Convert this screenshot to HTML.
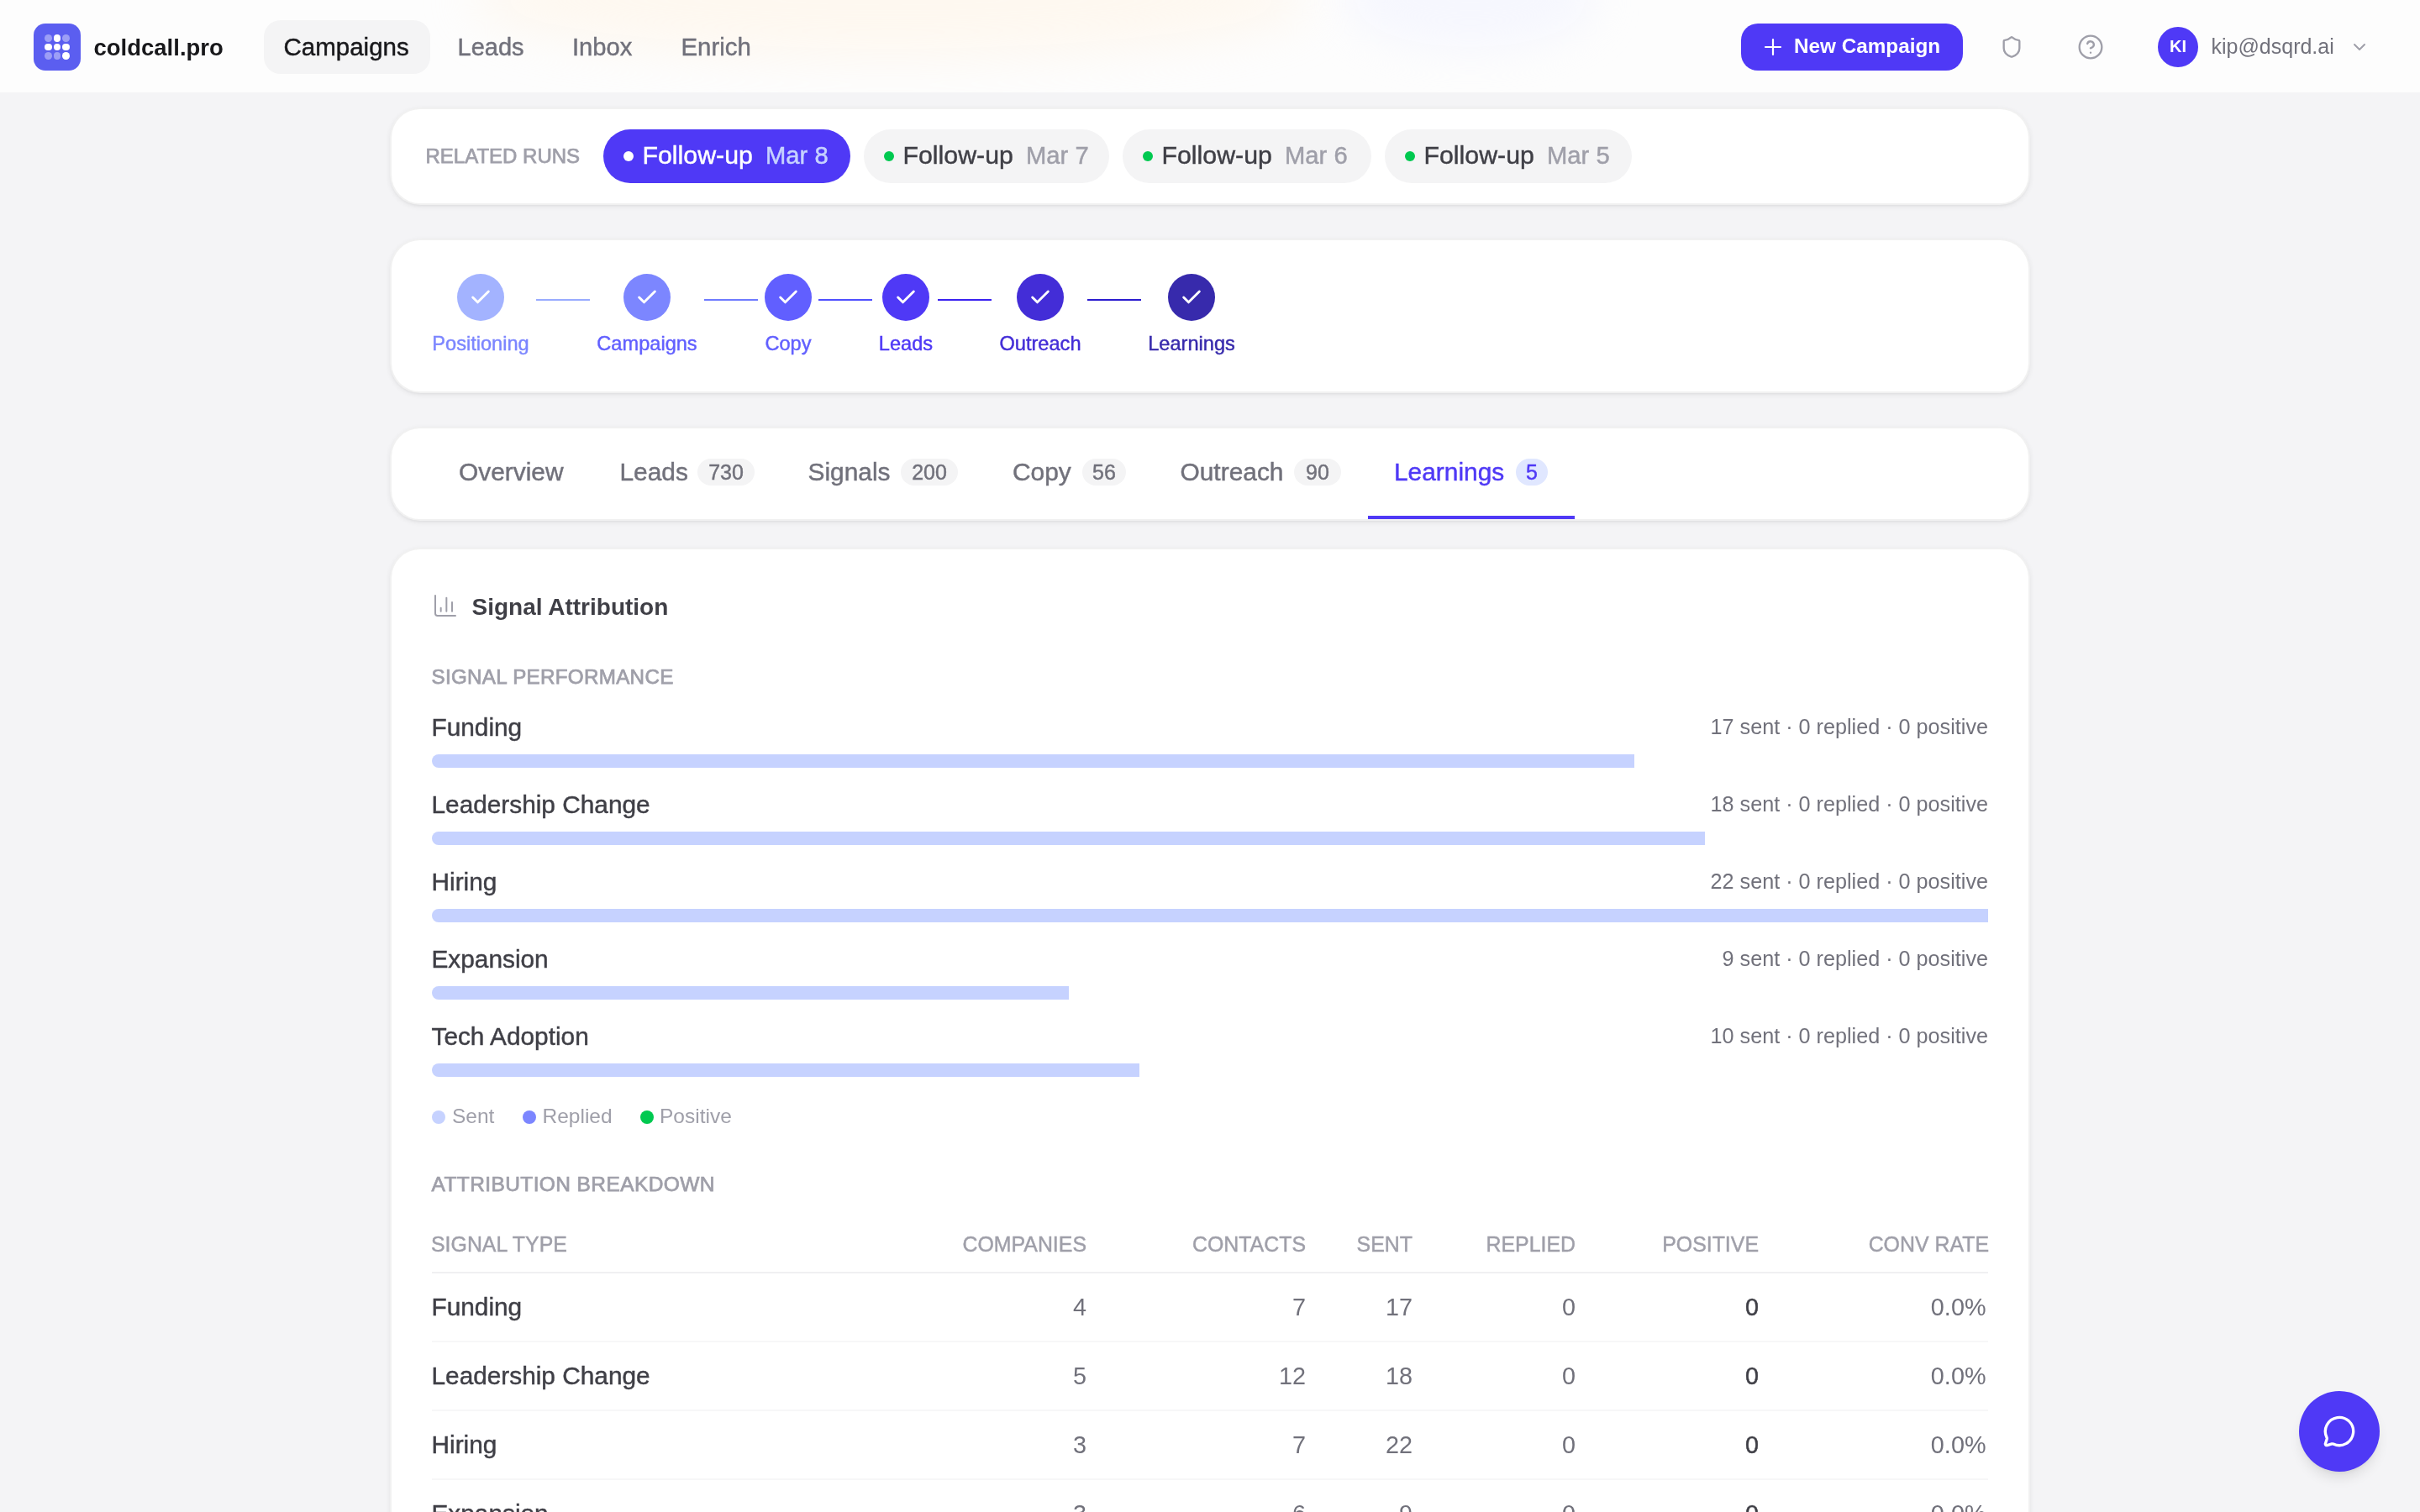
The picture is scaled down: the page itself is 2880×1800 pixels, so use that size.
<!DOCTYPE html>
<html><head><meta charset="utf-8"><title>coldcall.pro</title>
<style>
html,body{margin:0;padding:0;}
body{width:2880px;height:1800px;overflow:hidden;position:relative;background:#f4f4f6;font-family:"Liberation Sans",sans-serif;}
.t{position:absolute;white-space:pre;}
.b{position:absolute;}
svg{position:absolute;overflow:visible;}
@media (max-width:1600px){#root{zoom:0.5;}body{width:1440px;height:900px;}}
</style></head><body><div id="root" style="position:absolute;left:0;top:0;width:2880px;height:1800px;will-change:transform;">
<div class="b" style="left:0;top:0;width:2880px;height:110px;background:#fdfdfd;overflow:hidden;"><div class="b" style="left:560px;top:-70px;width:1000px;height:140px;border-radius:50%;background:rgba(255,244,228,0.5);filter:blur(28px);"></div><div class="b" style="left:1600px;top:-60px;width:300px;height:120px;border-radius:50%;background:rgba(242,243,255,0.6);filter:blur(24px);"></div></div>
<div class="b" style="left:40px;top:28px;width:56px;height:56px;background:#5b5ef0;border-radius:14px;"></div>
<div class="b" style="left:53.0px;top:40.8px;width:8.8px;height:8.8px;border-radius:50%;background:rgba(255,255,255,0.4);"></div>
<div class="b" style="left:63.6px;top:40.8px;width:8.8px;height:8.8px;border-radius:50%;background:rgba(255,255,255,1);"></div>
<div class="b" style="left:74.1px;top:40.8px;width:8.8px;height:8.8px;border-radius:50%;background:rgba(255,255,255,0.4);"></div>
<div class="b" style="left:53.0px;top:51.6px;width:8.8px;height:8.8px;border-radius:50%;background:rgba(255,255,255,1);"></div>
<div class="b" style="left:63.6px;top:51.6px;width:8.8px;height:8.8px;border-radius:50%;background:rgba(255,255,255,1);"></div>
<div class="b" style="left:74.1px;top:51.6px;width:8.8px;height:8.8px;border-radius:50%;background:rgba(255,255,255,1);"></div>
<div class="b" style="left:53.0px;top:62.2px;width:8.8px;height:8.8px;border-radius:50%;background:rgba(255,255,255,0.4);"></div>
<div class="b" style="left:63.6px;top:62.2px;width:8.8px;height:8.8px;border-radius:50%;background:rgba(255,255,255,0.4);"></div>
<div class="b" style="left:74.1px;top:62.2px;width:8.8px;height:8.8px;border-radius:50%;background:rgba(255,255,255,1);"></div>
<div class="t" style="top:43.02px;font-size:27.5px;line-height:27.5px;color:#18181b;font-weight:700;left:111.50px;">coldcall.pro</div>
<div class="b" style="left:314px;top:24px;width:198px;height:64px;background:#f4f4f5;border-radius:20px;"></div>
<div class="t" style="top:41.33px;font-size:29.5px;line-height:29.5px;color:#18181b;font-weight:400;left:337.50px;-webkit-text-stroke:0.45px currentColor;">Campaigns</div>
<div class="t" style="top:41.75px;font-size:29px;line-height:29px;color:#71717b;font-weight:400;left:544.50px;-webkit-text-stroke:0.45px currentColor;">Leads</div>
<div class="t" style="top:41.58px;font-size:29.2px;line-height:29.2px;color:#71717b;font-weight:400;left:681.00px;-webkit-text-stroke:0.45px currentColor;">Inbox</div>
<div class="t" style="top:41.41px;font-size:29.4px;line-height:29.4px;color:#71717b;font-weight:400;left:810.50px;-webkit-text-stroke:0.45px currentColor;">Enrich</div>
<div class="b" style="left:2072px;top:28px;width:264px;height:56px;background:#4f39f6;border-radius:20px;"></div>
<svg style="left:2098px;top:44px" width="24" height="24" viewBox="0 0 24 24" fill="none" stroke="#fff" stroke-width="2.2" stroke-linecap="round"><path d="M12 3v18M3 12h18"/></svg>
<div class="t" style="top:43.43px;font-size:24.3px;line-height:24.3px;color:#ffffff;font-weight:700;left:2135.00px;">New Campaign</div>
<svg style="left:2380px;top:42px" width="28" height="28" viewBox="0 0 24 24" fill="none" stroke="#9f9fa9" stroke-width="2" stroke-linecap="round" stroke-linejoin="round"><path d="M20 13c0 5-3.5 7.5-7.66 8.95a1 1 0 0 1-.67-.01C7.5 20.5 4 18 4 13V6a1 1 0 0 1 1-1c2 0 4.5-1.2 6.24-2.72a1.17 1.17 0 0 1 1.52 0C14.51 3.81 17 5 19 5a1 1 0 0 1 1 1z"/></svg>
<svg style="left:2472px;top:40px" width="32" height="32" viewBox="0 0 24 24" fill="none" stroke="#9f9fa9" stroke-width="1.75" stroke-linecap="round" stroke-linejoin="round"><circle cx="12" cy="12" r="10"/><path d="M9.09 9a3 3 0 0 1 5.83 1c0 2-3 3-3 3"/><path d="M12 17h.01"/></svg>
<div class="b" style="left:2568px;top:32px;width:48px;height:48px;background:#4f39f6;border-radius:24px;"></div>
<div class="t" style="top:45.17px;font-size:20px;line-height:20px;color:#ffffff;font-weight:700;left:2292.00px;width:600px;text-align:center;">KI</div>
<div class="t" style="top:42.84px;font-size:25px;line-height:25px;color:#71717b;font-weight:400;left:2631.50px;">kip@dsqrd.ai</div>
<svg style="left:2796px;top:44px" width="24" height="24" viewBox="0 0 24 24" fill="none" stroke="#9f9fa9" stroke-width="2" stroke-linecap="round" stroke-linejoin="round"><path d="m6 9 6 6 6-6"/></svg>
<div class="b" style="left:464px;top:128px;width:1952px;height:116px;box-sizing:border-box;border:2px solid rgba(0,0,0,0.055);background:#fff;border-radius:36px;box-shadow:0 2px 6px rgba(0,0,0,0.07),0 2px 4px -2px rgba(0,0,0,0.07);"></div>
<div class="b" style="left:464px;top:284px;width:1952px;height:184px;box-sizing:border-box;border:2px solid rgba(0,0,0,0.055);background:#fff;border-radius:36px;box-shadow:0 2px 6px rgba(0,0,0,0.07),0 2px 4px -2px rgba(0,0,0,0.07);"></div>
<div class="b" style="left:464px;top:508px;width:1952px;height:112px;box-sizing:border-box;border:2px solid rgba(0,0,0,0.055);background:#fff;border-radius:36px;box-shadow:0 2px 6px rgba(0,0,0,0.07),0 2px 4px -2px rgba(0,0,0,0.07);"></div>
<div class="b" style="left:464px;top:652px;width:1952px;height:1400px;box-sizing:border-box;border:2px solid rgba(0,0,0,0.055);background:#fff;border-radius:36px;box-shadow:0 2px 6px rgba(0,0,0,0.07),0 2px 4px -2px rgba(0,0,0,0.07);"></div>
<div class="t" style="top:173.68px;font-size:24px;line-height:24px;color:#9f9fa9;font-weight:400;left:506.50px;-webkit-text-stroke:0.75px currentColor;">RELATED RUNS</div>
<div class="b" style="left:718px;top:154px;width:294px;height:64px;background:#4f39f6;border-radius:32px;"></div>
<div class="b" style="left:742px;top:180px;width:12px;height:12px;border-radius:50%;background:#fff;"></div>
<div class="t" style="top:170.35px;font-size:30.3px;line-height:30.3px;color:#fff;font-weight:400;left:764.50px;-webkit-text-stroke:0.45px currentColor;">Follow-up</div>
<div class="t" style="top:171.28px;font-size:29.2px;line-height:29.2px;color:#c6d2ff;font-weight:400;left:911.00px;-webkit-text-stroke:0.45px currentColor;">Mar 8</div>
<div class="b" style="left:1028px;top:154px;width:292px;height:64px;background:#f4f4f5;border-radius:32px;"></div>
<div class="b" style="left:1052px;top:180px;width:12px;height:12px;border-radius:50%;background:#00c950;"></div>
<div class="t" style="top:170.35px;font-size:30.3px;line-height:30.3px;color:#3f3f46;font-weight:400;left:1074.50px;-webkit-text-stroke:0.45px currentColor;">Follow-up</div>
<div class="t" style="top:171.28px;font-size:29.2px;line-height:29.2px;color:#9f9fa9;font-weight:400;left:1221.00px;-webkit-text-stroke:0.45px currentColor;">Mar 7</div>
<div class="b" style="left:1336px;top:154px;width:296px;height:64px;background:#f4f4f5;border-radius:32px;"></div>
<div class="b" style="left:1360px;top:180px;width:12px;height:12px;border-radius:50%;background:#00c950;"></div>
<div class="t" style="top:170.35px;font-size:30.3px;line-height:30.3px;color:#3f3f46;font-weight:400;left:1382.50px;-webkit-text-stroke:0.45px currentColor;">Follow-up</div>
<div class="t" style="top:171.28px;font-size:29.2px;line-height:29.2px;color:#9f9fa9;font-weight:400;left:1529.00px;-webkit-text-stroke:0.45px currentColor;">Mar 6</div>
<div class="b" style="left:1648px;top:154px;width:294px;height:64px;background:#f4f4f5;border-radius:32px;"></div>
<div class="b" style="left:1672px;top:180px;width:12px;height:12px;border-radius:50%;background:#00c950;"></div>
<div class="t" style="top:170.35px;font-size:30.3px;line-height:30.3px;color:#3f3f46;font-weight:400;left:1694.50px;-webkit-text-stroke:0.45px currentColor;">Follow-up</div>
<div class="t" style="top:171.28px;font-size:29.2px;line-height:29.2px;color:#9f9fa9;font-weight:400;left:1841.00px;-webkit-text-stroke:0.45px currentColor;">Mar 5</div>
<div class="b" style="left:638px;top:356px;width:64px;height:2px;background:#98abff;border-radius:0px;"></div>
<div class="b" style="left:838px;top:356px;width:64px;height:2px;background:#6e7bff;border-radius:0px;"></div>
<div class="b" style="left:974px;top:356px;width:64px;height:2px;background:#4f4fff;border-radius:0px;"></div>
<div class="b" style="left:1116px;top:356px;width:64px;height:2px;background:#3a22f0;border-radius:0px;"></div>
<div class="b" style="left:1294px;top:356px;width:64px;height:2px;background:#2c1ccf;border-radius:0px;"></div>
<div class="b" style="left:544px;top:326px;width:56px;height:56px;background:#a3b3ff;border-radius:28px;"></div>
<svg style="left:558px;top:340px" width="28" height="28" viewBox="0 0 24 24" fill="none" stroke="#fff" stroke-width="2.5" stroke-linecap="round" stroke-linejoin="round"><path d="M20 6 9 17l-5-5"/></svg>
<div class="t" style="top:398.02px;font-size:23.6px;line-height:23.6px;color:#7c86ff;font-weight:400;left:272.00px;width:600px;text-align:center;-webkit-text-stroke:0.45px currentColor;">Positioning</div>
<div class="b" style="left:742px;top:326px;width:56px;height:56px;background:#7c86ff;border-radius:28px;"></div>
<svg style="left:756px;top:340px" width="28" height="28" viewBox="0 0 24 24" fill="none" stroke="#fff" stroke-width="2.5" stroke-linecap="round" stroke-linejoin="round"><path d="M20 6 9 17l-5-5"/></svg>
<div class="t" style="top:398.02px;font-size:23.6px;line-height:23.6px;color:#615fff;font-weight:400;left:470.00px;width:600px;text-align:center;-webkit-text-stroke:0.45px currentColor;">Campaigns</div>
<div class="b" style="left:910px;top:326px;width:56px;height:56px;background:#615fff;border-radius:28px;"></div>
<svg style="left:924px;top:340px" width="28" height="28" viewBox="0 0 24 24" fill="none" stroke="#fff" stroke-width="2.5" stroke-linecap="round" stroke-linejoin="round"><path d="M20 6 9 17l-5-5"/></svg>
<div class="t" style="top:398.02px;font-size:23.6px;line-height:23.6px;color:#615fff;font-weight:400;left:638.00px;width:600px;text-align:center;-webkit-text-stroke:0.45px currentColor;">Copy</div>
<div class="b" style="left:1050px;top:326px;width:56px;height:56px;background:#4f39f6;border-radius:28px;"></div>
<svg style="left:1064px;top:340px" width="28" height="28" viewBox="0 0 24 24" fill="none" stroke="#fff" stroke-width="2.5" stroke-linecap="round" stroke-linejoin="round"><path d="M20 6 9 17l-5-5"/></svg>
<div class="t" style="top:398.02px;font-size:23.6px;line-height:23.6px;color:#4f39f6;font-weight:400;left:778.00px;width:600px;text-align:center;-webkit-text-stroke:0.45px currentColor;">Leads</div>
<div class="b" style="left:1210px;top:326px;width:56px;height:56px;background:#432dd7;border-radius:28px;"></div>
<svg style="left:1224px;top:340px" width="28" height="28" viewBox="0 0 24 24" fill="none" stroke="#fff" stroke-width="2.5" stroke-linecap="round" stroke-linejoin="round"><path d="M20 6 9 17l-5-5"/></svg>
<div class="t" style="top:398.02px;font-size:23.6px;line-height:23.6px;color:#432dd7;font-weight:400;left:938.00px;width:600px;text-align:center;-webkit-text-stroke:0.45px currentColor;">Outreach</div>
<div class="b" style="left:1390px;top:326px;width:56px;height:56px;background:#372aac;border-radius:28px;"></div>
<svg style="left:1404px;top:340px" width="28" height="28" viewBox="0 0 24 24" fill="none" stroke="#fff" stroke-width="2.5" stroke-linecap="round" stroke-linejoin="round"><path d="M20 6 9 17l-5-5"/></svg>
<div class="t" style="top:398.02px;font-size:23.6px;line-height:23.6px;color:#372aac;font-weight:400;left:1118.00px;width:600px;text-align:center;-webkit-text-stroke:0.45px currentColor;">Learnings</div>
<div class="t" style="top:546.69px;font-size:29.9px;line-height:29.9px;color:#71717b;font-weight:400;left:546.00px;-webkit-text-stroke:0.45px currentColor;">Overview</div>
<div class="t" style="top:546.69px;font-size:29.9px;line-height:29.9px;color:#71717b;font-weight:400;left:737.50px;-webkit-text-stroke:0.45px currentColor;">Leads</div>
<div class="b" style="left:830px;top:546px;width:68px;height:32px;background:#f4f4f5;border-radius:16px;"></div>
<div class="t" style="top:549.84px;font-size:25px;line-height:25px;color:#71717b;font-weight:400;left:564.00px;width:600px;text-align:center;-webkit-text-stroke:0.45px currentColor;">730</div>
<div class="t" style="top:546.69px;font-size:29.9px;line-height:29.9px;color:#71717b;font-weight:400;left:961.50px;-webkit-text-stroke:0.45px currentColor;">Signals</div>
<div class="b" style="left:1072px;top:546px;width:68px;height:32px;background:#f4f4f5;border-radius:16px;"></div>
<div class="t" style="top:549.84px;font-size:25px;line-height:25px;color:#71717b;font-weight:400;left:806.00px;width:600px;text-align:center;-webkit-text-stroke:0.45px currentColor;">200</div>
<div class="t" style="top:546.69px;font-size:29.9px;line-height:29.9px;color:#71717b;font-weight:400;left:1205.00px;-webkit-text-stroke:0.45px currentColor;">Copy</div>
<div class="b" style="left:1288px;top:546px;width:52px;height:32px;background:#f4f4f5;border-radius:16px;"></div>
<div class="t" style="top:549.84px;font-size:25px;line-height:25px;color:#71717b;font-weight:400;left:1014.00px;width:600px;text-align:center;-webkit-text-stroke:0.45px currentColor;">56</div>
<div class="t" style="top:546.69px;font-size:29.9px;line-height:29.9px;color:#71717b;font-weight:400;left:1404.50px;-webkit-text-stroke:0.45px currentColor;">Outreach</div>
<div class="b" style="left:1540px;top:546px;width:56px;height:32px;background:#f4f4f5;border-radius:16px;"></div>
<div class="t" style="top:549.84px;font-size:25px;line-height:25px;color:#71717b;font-weight:400;left:1268.00px;width:600px;text-align:center;-webkit-text-stroke:0.45px currentColor;">90</div>
<div class="t" style="top:546.69px;font-size:29.9px;line-height:29.9px;color:#4f39f6;font-weight:400;left:1659.00px;-webkit-text-stroke:0.45px currentColor;">Learnings</div>
<div class="b" style="left:1804px;top:546px;width:38px;height:32px;background:#e0e7ff;border-radius:16px;"></div>
<div class="t" style="top:549.84px;font-size:25px;line-height:25px;color:#4f39f6;font-weight:400;left:1523.00px;width:600px;text-align:center;-webkit-text-stroke:0.45px currentColor;">5</div>
<div class="b" style="left:1628px;top:614px;width:246px;height:4px;background:#4f39f6;border-radius:0px;"></div>
<svg style="left:514px;top:705px" width="32" height="32" viewBox="0 0 24 24" fill="none" stroke="#9f9fa9" stroke-width="1.5" stroke-linecap="round" stroke-linejoin="round"><path d="M3 3v16a2 2 0 0 0 2 2h16"/><path d="M18 17V9"/><path d="M13 17V5"/><path d="M8 17v-3"/></svg>
<div class="t" style="top:708.90px;font-size:28px;line-height:28px;color:#3f3f46;font-weight:700;left:561.50px;">Signal Attribution</div>
<div class="t" style="top:793.51px;font-size:24.2px;line-height:24.2px;color:#9f9fa9;font-weight:400;letter-spacing:0.3px;left:513.50px;-webkit-text-stroke:0.75px currentColor;">SIGNAL PERFORMANCE</div>
<div class="t" style="top:850.77px;font-size:29.8px;line-height:29.8px;color:#3f3f46;font-weight:400;left:513.50px;-webkit-text-stroke:0.45px currentColor;">Funding</div>
<div class="t" style="top:853.17px;font-size:25.2px;line-height:25.2px;color:#71717b;font-weight:400;right:514.00px;text-align:right;">17 sent · 0 replied · 0 positive</div>
<div class="b" style="left:514px;top:898px;width:1431px;height:16px;background:#c6d2ff;border-radius:0px;border-radius:8px 0 0 8px;"></div>
<div class="t" style="top:942.77px;font-size:29.8px;line-height:29.8px;color:#3f3f46;font-weight:400;left:513.50px;-webkit-text-stroke:0.45px currentColor;">Leadership Change</div>
<div class="t" style="top:945.17px;font-size:25.2px;line-height:25.2px;color:#71717b;font-weight:400;right:514.00px;text-align:right;">18 sent · 0 replied · 0 positive</div>
<div class="b" style="left:514px;top:990px;width:1515px;height:16px;background:#c6d2ff;border-radius:0px;border-radius:8px 0 0 8px;"></div>
<div class="t" style="top:1034.77px;font-size:29.8px;line-height:29.8px;color:#3f3f46;font-weight:400;left:513.50px;-webkit-text-stroke:0.45px currentColor;">Hiring</div>
<div class="t" style="top:1037.17px;font-size:25.2px;line-height:25.2px;color:#71717b;font-weight:400;right:514.00px;text-align:right;">22 sent · 0 replied · 0 positive</div>
<div class="b" style="left:514px;top:1082px;width:1852px;height:16px;background:#c6d2ff;border-radius:0px;border-radius:8px 0 0 8px;"></div>
<div class="t" style="top:1126.77px;font-size:29.8px;line-height:29.8px;color:#3f3f46;font-weight:400;left:513.50px;-webkit-text-stroke:0.45px currentColor;">Expansion</div>
<div class="t" style="top:1129.17px;font-size:25.2px;line-height:25.2px;color:#71717b;font-weight:400;right:514.00px;text-align:right;">9 sent · 0 replied · 0 positive</div>
<div class="b" style="left:514px;top:1174px;width:758px;height:16px;background:#c6d2ff;border-radius:0px;border-radius:8px 0 0 8px;"></div>
<div class="t" style="top:1218.77px;font-size:29.8px;line-height:29.8px;color:#3f3f46;font-weight:400;left:513.50px;-webkit-text-stroke:0.45px currentColor;">Tech Adoption</div>
<div class="t" style="top:1221.17px;font-size:25.2px;line-height:25.2px;color:#71717b;font-weight:400;right:514.00px;text-align:right;">10 sent · 0 replied · 0 positive</div>
<div class="b" style="left:514px;top:1266px;width:842px;height:16px;background:#c6d2ff;border-radius:0px;border-radius:8px 0 0 8px;"></div>
<div class="b" style="left:514px;top:1322px;width:16px;height:16px;background:#c6d2ff;border-radius:8px;"></div>
<div class="t" style="top:1317.46px;font-size:24.5px;line-height:24.5px;color:#9f9fa9;font-weight:400;left:538.00px;">Sent</div>
<div class="b" style="left:622px;top:1322px;width:16px;height:16px;background:#7c86ff;border-radius:8px;"></div>
<div class="t" style="top:1317.46px;font-size:24.5px;line-height:24.5px;color:#9f9fa9;font-weight:400;left:645.50px;">Replied</div>
<div class="b" style="left:762px;top:1322px;width:16px;height:16px;background:#00c950;border-radius:8px;"></div>
<div class="t" style="top:1317.46px;font-size:24.5px;line-height:24.5px;color:#9f9fa9;font-weight:400;left:785.00px;">Positive</div>
<div class="t" style="top:1397.56px;font-size:24.5px;line-height:24.5px;color:#9f9fa9;font-weight:400;letter-spacing:0.4px;left:513.50px;-webkit-text-stroke:0.75px currentColor;">ATTRIBUTION BREAKDOWN</div>
<div class="t" style="top:1468.92px;font-size:24.9px;line-height:24.9px;color:#9f9fa9;font-weight:400;left:513.00px;-webkit-text-stroke:0.45px currentColor;">SIGNAL TYPE</div>
<div class="t" style="top:1468.92px;font-size:24.9px;line-height:24.9px;color:#9f9fa9;font-weight:400;right:1587.00px;text-align:right;-webkit-text-stroke:0.45px currentColor;">COMPANIES</div>
<div class="t" style="top:1468.92px;font-size:24.9px;line-height:24.9px;color:#9f9fa9;font-weight:400;right:1326.00px;text-align:right;-webkit-text-stroke:0.45px currentColor;">CONTACTS</div>
<div class="t" style="top:1468.92px;font-size:24.9px;line-height:24.9px;color:#9f9fa9;font-weight:400;right:1199.00px;text-align:right;-webkit-text-stroke:0.45px currentColor;">SENT</div>
<div class="t" style="top:1468.92px;font-size:24.9px;line-height:24.9px;color:#9f9fa9;font-weight:400;right:1005.00px;text-align:right;-webkit-text-stroke:0.45px currentColor;">REPLIED</div>
<div class="t" style="top:1468.92px;font-size:24.9px;line-height:24.9px;color:#9f9fa9;font-weight:400;right:787.00px;text-align:right;-webkit-text-stroke:0.45px currentColor;">POSITIVE</div>
<div class="t" style="top:1468.92px;font-size:24.9px;line-height:24.9px;color:#9f9fa9;font-weight:400;right:513.00px;text-align:right;-webkit-text-stroke:0.45px currentColor;">CONV RATE</div>
<div class="b" style="left:514px;top:1514px;width:1852px;height:2px;background:#f0f0f2;border-radius:0px;"></div>
<div class="t" style="top:1540.77px;font-size:29.8px;line-height:29.8px;color:#3f3f46;font-weight:400;left:513.50px;-webkit-text-stroke:0.45px currentColor;">Funding</div>
<div class="t" style="top:1541.62px;font-size:28.8px;line-height:28.8px;color:#71717b;font-weight:400;right:1587.00px;text-align:right;">4</div>
<div class="t" style="top:1541.62px;font-size:28.8px;line-height:28.8px;color:#71717b;font-weight:400;right:1326.00px;text-align:right;">7</div>
<div class="t" style="top:1541.62px;font-size:28.8px;line-height:28.8px;color:#71717b;font-weight:400;right:1199.00px;text-align:right;">17</div>
<div class="t" style="top:1541.62px;font-size:28.8px;line-height:28.8px;color:#71717b;font-weight:400;right:1005.00px;text-align:right;">0</div>
<div class="t" style="top:1541.62px;font-size:28.8px;line-height:28.8px;color:#3f3f46;font-weight:400;right:787.00px;text-align:right;-webkit-text-stroke:0.45px currentColor;">0</div>
<div class="t" style="top:1541.62px;font-size:28.8px;line-height:28.8px;color:#71717b;font-weight:400;right:516.50px;text-align:right;">0.0%</div>
<div class="b" style="left:514px;top:1596px;width:1852px;height:2px;background:#f7f7f8;border-radius:0px;"></div>
<div class="t" style="top:1622.77px;font-size:29.8px;line-height:29.8px;color:#3f3f46;font-weight:400;left:513.50px;-webkit-text-stroke:0.45px currentColor;">Leadership Change</div>
<div class="t" style="top:1623.62px;font-size:28.8px;line-height:28.8px;color:#71717b;font-weight:400;right:1587.00px;text-align:right;">5</div>
<div class="t" style="top:1623.62px;font-size:28.8px;line-height:28.8px;color:#71717b;font-weight:400;right:1326.00px;text-align:right;">12</div>
<div class="t" style="top:1623.62px;font-size:28.8px;line-height:28.8px;color:#71717b;font-weight:400;right:1199.00px;text-align:right;">18</div>
<div class="t" style="top:1623.62px;font-size:28.8px;line-height:28.8px;color:#71717b;font-weight:400;right:1005.00px;text-align:right;">0</div>
<div class="t" style="top:1623.62px;font-size:28.8px;line-height:28.8px;color:#3f3f46;font-weight:400;right:787.00px;text-align:right;-webkit-text-stroke:0.45px currentColor;">0</div>
<div class="t" style="top:1623.62px;font-size:28.8px;line-height:28.8px;color:#71717b;font-weight:400;right:516.50px;text-align:right;">0.0%</div>
<div class="b" style="left:514px;top:1678px;width:1852px;height:2px;background:#f7f7f8;border-radius:0px;"></div>
<div class="t" style="top:1704.77px;font-size:29.8px;line-height:29.8px;color:#3f3f46;font-weight:400;left:513.50px;-webkit-text-stroke:0.45px currentColor;">Hiring</div>
<div class="t" style="top:1705.62px;font-size:28.8px;line-height:28.8px;color:#71717b;font-weight:400;right:1587.00px;text-align:right;">3</div>
<div class="t" style="top:1705.62px;font-size:28.8px;line-height:28.8px;color:#71717b;font-weight:400;right:1326.00px;text-align:right;">7</div>
<div class="t" style="top:1705.62px;font-size:28.8px;line-height:28.8px;color:#71717b;font-weight:400;right:1199.00px;text-align:right;">22</div>
<div class="t" style="top:1705.62px;font-size:28.8px;line-height:28.8px;color:#71717b;font-weight:400;right:1005.00px;text-align:right;">0</div>
<div class="t" style="top:1705.62px;font-size:28.8px;line-height:28.8px;color:#3f3f46;font-weight:400;right:787.00px;text-align:right;-webkit-text-stroke:0.45px currentColor;">0</div>
<div class="t" style="top:1705.62px;font-size:28.8px;line-height:28.8px;color:#71717b;font-weight:400;right:516.50px;text-align:right;">0.0%</div>
<div class="b" style="left:514px;top:1760px;width:1852px;height:2px;background:#f7f7f8;border-radius:0px;"></div>
<div class="t" style="top:1786.77px;font-size:29.8px;line-height:29.8px;color:#3f3f46;font-weight:400;left:513.50px;-webkit-text-stroke:0.45px currentColor;">Expansion</div>
<div class="t" style="top:1787.62px;font-size:28.8px;line-height:28.8px;color:#71717b;font-weight:400;right:1587.00px;text-align:right;">3</div>
<div class="t" style="top:1787.62px;font-size:28.8px;line-height:28.8px;color:#71717b;font-weight:400;right:1326.00px;text-align:right;">6</div>
<div class="t" style="top:1787.62px;font-size:28.8px;line-height:28.8px;color:#71717b;font-weight:400;right:1199.00px;text-align:right;">9</div>
<div class="t" style="top:1787.62px;font-size:28.8px;line-height:28.8px;color:#71717b;font-weight:400;right:1005.00px;text-align:right;">0</div>
<div class="t" style="top:1787.62px;font-size:28.8px;line-height:28.8px;color:#3f3f46;font-weight:400;right:787.00px;text-align:right;-webkit-text-stroke:0.45px currentColor;">0</div>
<div class="t" style="top:1787.62px;font-size:28.8px;line-height:28.8px;color:#71717b;font-weight:400;right:516.50px;text-align:right;">0.0%</div>
<div class="b" style="left:2736px;top:1656px;width:96px;height:96px;border-radius:48px;background:#4f39f6;box-shadow:0 10px 15px -3px rgba(0,0,0,0.1),0 4px 6px -4px rgba(0,0,0,0.1);"></div>
<svg style="left:2764px;top:1684px" width="40" height="40" viewBox="0 0 24 24" fill="none" stroke="#fff" stroke-width="2" stroke-linecap="round" stroke-linejoin="round"><path d="M2.992 16.342a2 2 0 0 1 .094 1.167l-1.065 3.29a1 1 0 0 0 1.236 1.168l3.413-.998a2 2 0 0 1 1.099.092 10 10 0 1 0-4.777-4.719"/></svg>
</div></body></html>
